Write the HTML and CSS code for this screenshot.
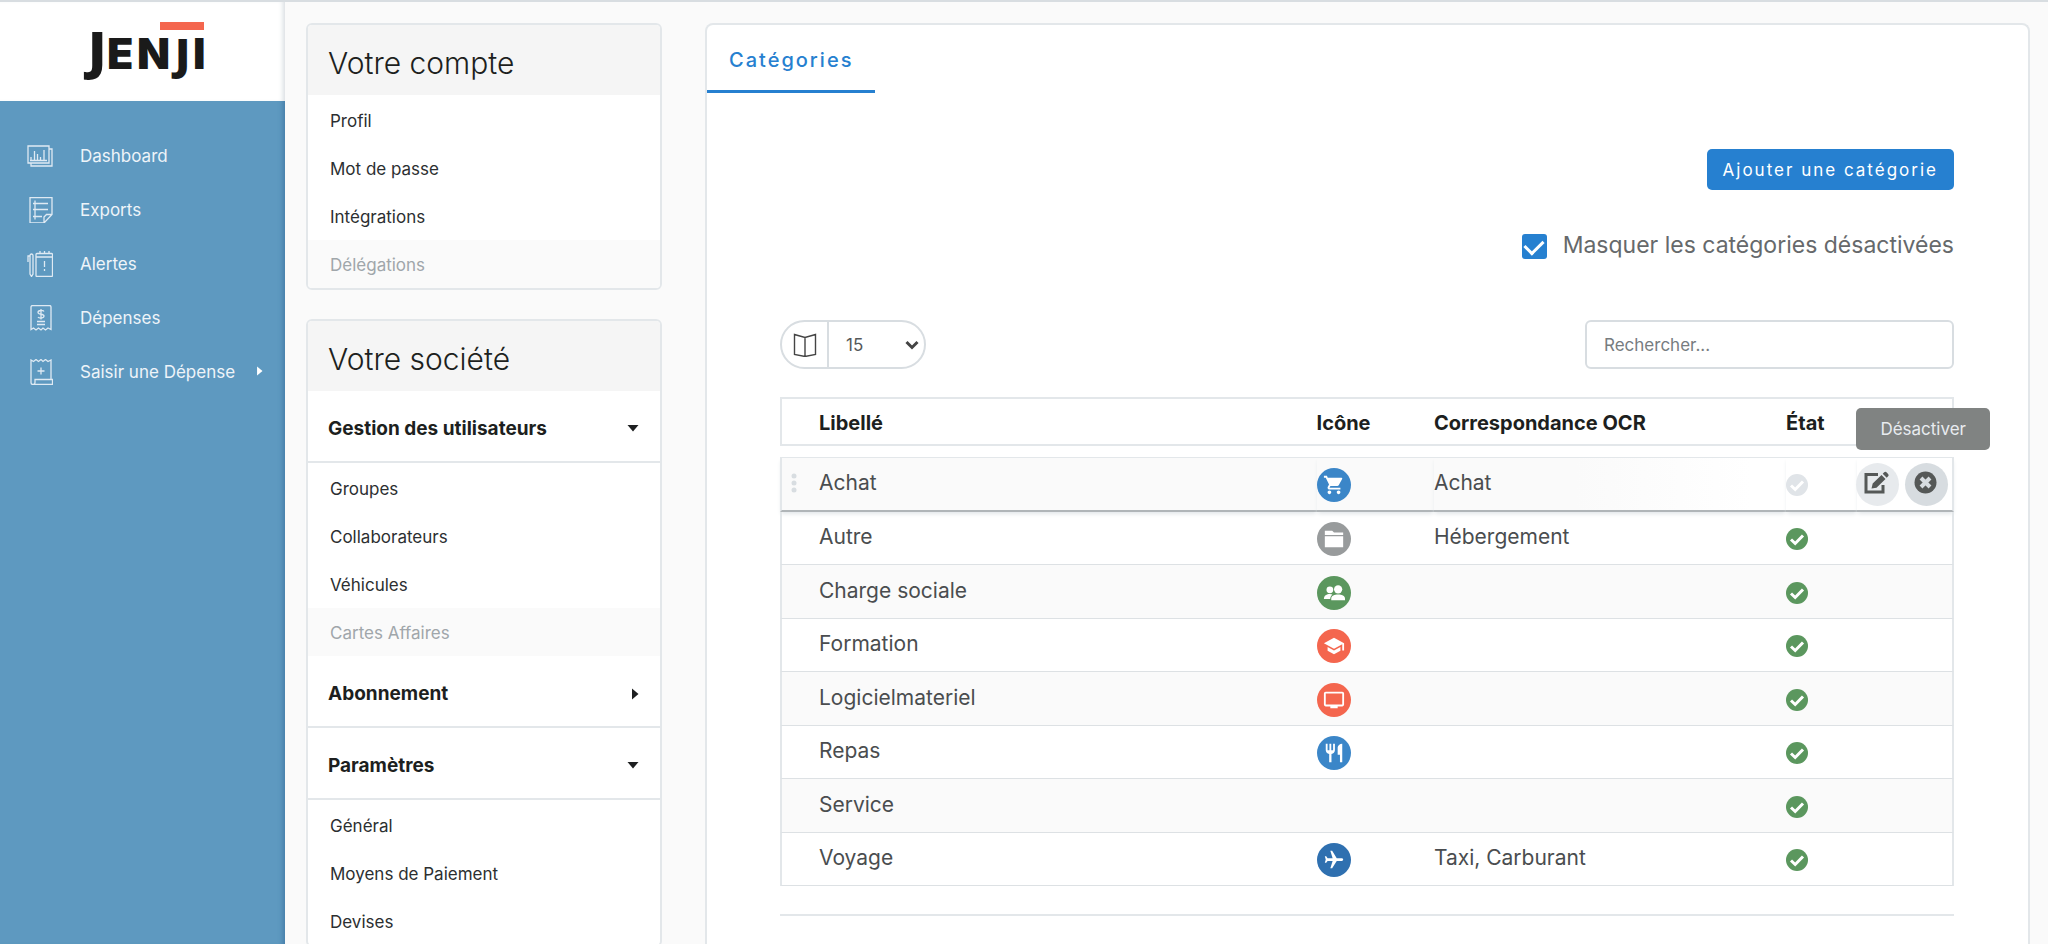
FILE: index.html
```
<!DOCTYPE html>
<html lang="fr">
<head>
<meta charset="utf-8">
<title>Jenji – Catégories</title>
<link rel="stylesheet" href="styles.css">
</head>
<body>
<svg class="defs" aria-hidden="true">
  <symbol id="check" viewBox="0 0 22 22"><circle cx="11" cy="11" r="11" fill="currentColor"/><path d="M5 11.500l4.200 4 7.800-8" fill="none" stroke="#fff" stroke-width="3"/></symbol>
  <symbol id="down" viewBox="0 0 12 7"><path d="M0.500 0h11L6 6.500z" fill="currentColor"/></symbol>
  <symbol id="right" viewBox="0 0 7 12"><path d="M0 0.500v11L6.500 6z" fill="currentColor"/></symbol>
</svg>
<div class="app">
  <aside class="sidebar">
    <a class="logo" href="#" aria-label="Jenji">
      <svg width="154" height="99" viewBox="70 2 154 99" aria-hidden="true">
        <rect x="160" y="22" width="44" height="8" fill="#f4664e"/>
        <text class="logo-text" y="69"><tspan class="logo-cap" x="88">J</tspan><tspan x="107 137">EN</tspan><tspan class="logo-j" x="175">J</tspan><tspan x="193">I</tspan></text>
      </svg>
    </a>
    <nav class="nav">
      <a href="#"><svg class="nav-icon" viewBox="0 0 26 26"><path d="M1 3h21v17H1zM22 6h3v17H4v-3M3 17.500h17M4 17v-3M7.500 17V8M10.500 17v-6M13.500 17v-3M17 17V7"/></svg>Dashboard</a>
      <a href="#"><svg class="nav-icon" viewBox="0 0 26 26"><path d="M3 .5h22v17L17 26H3zM25 17.500h-5.500L17 20v6M8 3.500v19M6 6.500h15M6 12.500h15M6 19.500h9"/></svg>Exports</a>
      <a href="#"><svg class="nav-icon" viewBox="0 0 26 26"><rect x="9" y="2.500" width="16.500" height="23" rx="1"/><path d="M9 6h16.500M13 0v3M17.500 0v3M22 0v3M17.500 10v6M17.500 18v2M3 4.500a1.500 1.500 0 0 1 3 0V23l-1.500 2.500L3 23zM3 5H1v6"/></svg>Alertes</a>
      <a href="#"><svg class="nav-icon" viewBox="0 0 26 26"><path d="M4 24.500V2a1.500 1.500 0 0 1 1.500-1.500h17A1.500 1.500 0 0 1 24 2v22.500l-3-1.500-2.500 2-2.500-2-2 2-2.500-2L9 25l-2.500-2zM17 6.500c-1-1.500-6-1.500-6 1s6 1 6 3.500-5 2.500-6 1M14 4v10.500M10 16.500h8M10 19.500h8"/></svg>Dépenses</a>
      <a href="#"><svg class="nav-icon" viewBox="0 0 26 26"><path d="M24 20.500V1l-3 1.500L18.500.5 16 2.500l-2-2-2.500 2L9 .5 6.500 2.500 4 1v22.500a2 2 0 0 0 2 2h19.500v-5H8v3a2 2 0 0 1-2 2M10.500 12h7M14 8.500v7"/></svg>Saisir une Dépense<svg class="arrow-right" viewBox="0 0 7 12"><use href="#right"/></svg></a>
    </nav>
  </aside>

  <div class="settings">
    <section class="card">
      <h2>Votre compte</h2>
      <ul>
        <li><a href="#">Profil</a></li>
        <li><a href="#">Mot de passe</a></li>
        <li><a href="#">Intégrations</a></li>
        <li class="off"><a>Délégations</a></li>
      </ul>
    </section>
    <section class="card">
      <h2>Votre société</h2>
      <button class="group" type="button" aria-expanded="true">Gestion des utilisateurs<svg class="arrow-down"><use href="#down"/></svg></button>
      <ul>
        <li><a href="#">Groupes</a></li>
        <li><a href="#">Collaborateurs</a></li>
        <li><a href="#">Véhicules</a></li>
        <li class="off"><a>Cartes Affaires</a></li>
      </ul>
      <button class="group" type="button" aria-expanded="false">Abonnement<svg class="arrow-right"><use href="#right"/></svg></button>
      <button class="group" type="button" aria-expanded="true">Paramètres<svg class="arrow-down"><use href="#down"/></svg></button>
      <ul>
        <li><a href="#">Général</a></li>
        <li><a href="#">Moyens de Paiement</a></li>
        <li><a href="#">Devises</a></li>
      </ul>
    </section>
  </div>

  <main class="panel">
    <nav class="tabs"><a class="tab" href="#">Catégories</a></nav>
    <div class="content">
      <button class="primary" type="button">Ajouter une catégorie</button>
      <label class="hide-toggle"><input type="checkbox" checked>Masquer les catégories désactivées</label>
      <div class="tools">
        <div class="pager">
          <span class="pager-icon"><svg width="24" height="24" viewBox="0 0 24 24"><path d="M1.500 1.500L12 4.500l10.500-3v20L12 23.500l-10.500-2zM12 4.500v19"/></svg></span>
          <select aria-label="Lignes par page"><option>15</option></select>
          <svg class="chevron" width="14" height="10" viewBox="0 0 14 10"><path d="M1.500 2L7 7.500 12.500 2"/></svg>
        </div>
        <input class="search" type="search" placeholder="Rechercher..." aria-label="Rechercher">
      </div>
      <table>
        <colgroup><col class="c-label"><col class="c-icon"><col class="c-ocr"><col class="c-state"><col class="c-actions"></colgroup>
        <thead><tr><th>Libellé</th><th>Icône</th><th>Correspondance OCR</th><th>État</th><th></th></tr></thead>
        <tbody>
          <tr class="hovered">
            <td><span class="label"><svg class="grip" width="6" height="20" viewBox="0 0 6 20"><circle cx="3" cy="3" r="2.500"/><circle cx="3" cy="10" r="2.500"/><circle cx="3" cy="17" r="2.500"/></svg>Achat</span></td>
            <td><span class="badge blue"><svg viewBox="0 0 24 24"><path d="M7 18c-1.100 0-1.990.9-1.990 2S5.900 22 7 22s2-.9 2-2-.9-2-2-2zM1 2v2h2l3.600 7.590-1.350 2.450c-.16.280-.25.610-.25.960 0 1.100.9 2 2 2h12v-2H7.420c-.14 0-.25-.11-.25-.25l.03-.12.9-1.630h7.450c.75 0 1.410-.41 1.750-1.030l3.580-6.490c.08-.14.120-.31.120-.48 0-.55-.45-1-1-1H5.210l-.94-2H1zm16 16c-1.100 0-1.990.9-1.990 2s.89 2 1.990 2 2-.9 2-2-.9-2-2-2z"/></svg></span></td>
            <td>Achat</td>
            <td><svg class="state pale"><use href="#check"/></svg></td>
            <td><div class="actions">
              <button type="button" aria-label="Modifier"><svg width="26" height="24" viewBox="0 0 26 24"><path d="M15 3.500H3v17.500h17v-7" fill="none" stroke="currentColor" stroke-width="3"/><path d="M8.500 17.500l1.200-5L18.500 4l4 4-9 8.700zM19.700 2.800L21.200 1.300q1.200-1 2.500.1l1.400 1.500q1 1.300 0 2.400l-1.400 1.500z"/></svg></button>
              <button class="active" type="button" aria-label="Désactiver" aria-describedby="tip"><svg width="23" height="23" viewBox="0 0 23 23"><circle cx="11.500" cy="11.500" r="11"/><path d="M7 7l9 9M16 7l-9 9" stroke="#d7dce0" stroke-width="4"/></svg></button>
              <span class="tooltip" id="tip" role="tooltip">Désactiver</span>
            </div></td>
          </tr>
          <tr>
            <td><span class="label">Autre</span></td>
            <td><span class="badge grey"><svg viewBox="0 0 24 24"><path d="M2 3h8l2 2h10v2.500H2zM2 9h20v12H2z"/></svg></span></td>
            <td>Hébergement</td><td><svg class="state"><use href="#check"/></svg></td><td></td>
          </tr>
          <tr>
            <td><span class="label">Charge sociale</span></td>
            <td><span class="badge green"><svg viewBox="0 0 24 24"><circle cx="7.500" cy="8.500" r="3.700"/><circle cx="16.500" cy="8" r="4.500"/><path d="M1 18.500c0-4 3-5.500 6.500-5.500 1 0 2 .2 2.800.5C8.800 14.700 8 16.300 7.800 18.500zM9 20v-2c0-3.200 3.500-4.500 7.500-4.500S24 14.800 24 18v2z"/></svg></span></td>
            <td></td><td><svg class="state"><use href="#check"/></svg></td><td></td>
          </tr>
          <tr>
            <td><span class="label">Formation</span></td>
            <td><span class="badge red"><svg viewBox="0 0 24 24"><path d="M5 13.180v4L12 21l7-3.820v-4L12 17l-7-3.820zM12 3L1 9l11 6 9-4.910V17h2V9L12 3z"/></svg></span></td>
            <td></td><td><svg class="state"><use href="#check"/></svg></td><td></td>
          </tr>
          <tr>
            <td><span class="label">Logicielmateriel</span></td>
            <td><span class="badge red"><svg viewBox="0 0 24 24"><path d="M21 3H3c-1.100 0-2 .9-2 2v12c0 1.100.9 2 2 2h5v2h8v-2h5c1.100 0 1.990-.9 1.990-2L23 5c0-1.100-.9-2-2-2zm0 14H3V5h18v12z"/></svg></span></td>
            <td></td><td><svg class="state"><use href="#check"/></svg></td><td></td>
          </tr>
          <tr>
            <td><span class="label">Repas</span></td>
            <td><span class="badge blue"><svg viewBox="0 0 24 24"><path d="M11 9H9V2H7v7H5V2H3v7c0 2.120 1.660 3.840 3.750 3.970V22h2.500v-9.030C11.340 12.840 13 11.120 13 9V2h-2v7zm5-3v8h2.500v8H21V2c-2.760 0-5 2.240-5 4z"/></svg></span></td>
            <td></td><td><svg class="state"><use href="#check"/></svg></td><td></td>
          </tr>
          <tr>
            <td><span class="label">Service</span></td>
            <td></td><td></td><td><svg class="state"><use href="#check"/></svg></td><td></td>
          </tr>
          <tr>
            <td><span class="label">Voyage</span></td>
            <td><span class="badge navy"><svg viewBox="0 0 24 24"><path transform="rotate(90 12 12)" d="M21 16v-2l-8-5V3.500c0-.83-.67-1.500-1.500-1.500S10 2.670 10 3.500V9l-8 5v2l8-2.500V19l-2 1.500V22l3.500-1 3.500 1v-1.500L13 19v-5.500l8 2.500z"/></svg></span></td>
            <td>Taxi, Carburant</td><td><svg class="state"><use href="#check"/></svg></td><td></td>
          </tr>
        </tbody>
      </table>
      <hr>
    </div>
  </main>
</div>
</body>
</html>
```
FILE: styles.css
```
* { box-sizing: border-box; }
body {
  margin: 0;
  font-family: Inter, "Liberation Sans", sans-serif;
  font-size: 17px;
  color: #1d1f20;
  background: #fafafa;
}
a { color: inherit; text-decoration: none; }
button, input, select { font: inherit; color: inherit; }
.defs { display: none; }

.app {
  display: flex;
  align-items: flex-start;
  height: 100vh;
  overflow: hidden;
  border-top: 2px solid #d8dde1;
}

/* Sidebar */
.sidebar {
  flex: 0 0 285px;
  align-self: stretch;
  background: #5e99c0;
  box-shadow: inset -6px 0 5px -4px rgba(30, 80, 130, .4);
}
.logo {
  display: flex;
  justify-content: center;
  padding-left: 9px;
  background: #fff;
  box-shadow: inset -5px 0 5px -3px #d8dde1;
}
.logo-text { font: 900 43px Inter, sans-serif; fill: #1a1a1a; }
.logo-cap, .logo-j { font-family: "Open Sans", "Noto Sans", sans-serif; font-weight: 800; }
.logo-cap { font-size: 52px; }
.nav { display: flex; flex-direction: column; padding: 28px 0 0 27px; }
.nav a { display: flex; align-items: center; height: 54px; color: #eef4f9; }
.nav-icon {
  width: 26px;
  height: 26px;
  margin-right: 27px;
  fill: none;
  stroke: #dfeaf3;
  stroke-width: 1.3;
}
.arrow-right { width: 7px; height: 12px; }
.arrow-down { width: 12px; height: 7px; }
.nav .arrow-right { margin: 0 22px 2px auto; color: #fff; width: 6px; height: 10px; }

/* Settings menu */
.settings {
  flex: 0 0 356px;
  display: flex;
  flex-direction: column;
  gap: 29px;
  margin: 21px 43px 0 21px;
}
.card { overflow: hidden; background: #fff; border: 2px solid #e3e7ea; border-radius: 6px; }
.card h2 {
  margin: 0;
  padding: 20px 20px 14px;
  font-size: 30px;
  line-height: 36px;
  font-weight: 300;
  background: #f5f5f5;
}
.card ul { margin: 0; padding: 1px 0 0; list-style: none; }
.card li { padding: 15px 22px 13px; line-height: 20px; color: #2c2f31; }
.card li.off { color: #a0a6aa; background: #fafafa; }
.group {
  display: flex;
  justify-content: space-between;
  align-items: center;
  width: 100%;
  height: 72px;
  padding: 5px 21px 0 20px;
  border: 0;
  border-bottom: 2px solid #e3e7ea;
  background: none;
  font-size: 19px;
  font-weight: 700;
}

/* Main panel */
.panel {
  flex: 1;
  align-self: stretch;
  margin: 21px 18px 0 0;
  background: #fff;
  border: 2px solid #e3e7ea;
  border-bottom: 0;
  border-radius: 8px 8px 0 0;
}
.tabs { display: flex; }
.tab {
  padding: 23px 22px 17px;
  line-height: 25px;
  font-size: 20px;
  font-weight: 500;
  letter-spacing: 2px;
  color: #2680d0;
  border-bottom: 3px solid #2680d0;
}
.content { display: flex; flex-direction: column; padding: 56px 74px 0 73px; }
.primary {
  align-self: flex-end;
  height: 41px;
  padding: 0 16px;
  border: 0;
  border-radius: 5px;
  background: #2680d0;
  color: #fff;
  font-size: 17px;
  letter-spacing: 2px;
}
.hide-toggle {
  align-self: flex-end;
  display: flex;
  align-items: center;
  gap: 16px;
  margin-top: 40px;
  line-height: 30px;
  font-size: 23px;
  color: #66696b;
}
.hide-toggle input {
  appearance: none;
  display: grid;
  place-items: center;
  width: 25px;
  height: 25px;
  margin: 3px 0 0;
  border-radius: 3px;
  background: #2680d0;
}
.hide-toggle input:checked::before {
  content: "";
  width: 15px;
  height: 9px;
  margin-bottom: 4px;
  border: solid #fff;
  border-width: 0 0 3px 3px;
  transform: rotate(-45deg);
}
.tools { display: flex; justify-content: space-between; margin-top: 60px; }
.pager {
  position: relative;
  display: flex;
  width: 146px;
  height: 49px;
  border: 2px solid #d8dde1;
  border-radius: 25px;
  overflow: hidden;
}
.pager-icon {
  display: grid;
  place-items: center;
  width: 47px;
  border-right: 2px solid #d8dde1;
}
.pager-icon svg { fill: none; stroke: #444; stroke-width: 1.4; }
.pager select {
  appearance: none;
  flex: 1;
  padding: 0 17px;
  border: 0;
  background: none;
  font-size: 17px;
  color: #55585a;
}
.chevron {
  position: absolute;
  right: 5px;
  top: 18px;
  fill: none;
  stroke: #444;
  stroke-width: 3;
  pointer-events: none;
}
.search {
  appearance: none;
  width: 369px;
  height: 49px;
  padding: 0 17px;
  border: 2px solid #d8dde1;
  border-radius: 6px;
  background: #fff;
  font-size: 17px;
}
.search::placeholder { color: #777c7f; opacity: 1; }

/* Categories table */
table {
  width: 100%;
  margin-top: 28px;
  border-collapse: separate;
  border-spacing: 0;
  table-layout: fixed;
  font-size: 21px;
}
.c-label { width: 45.7%; }
.c-icon { width: 10%; }
.c-ocr { width: 30%; }
.c-state { width: 6%; }
.c-actions { width: 8.3%; }
th {
  height: 49px;
  padding: 2px 0 0;
  border: solid #e3e7ea;
  border-width: 2px 0;
  text-align: left;
  font-size: 20px;
  font-weight: 700;
  white-space: nowrap;
}
th:first-child { padding-left: 37px; }
tr > :first-child { border-left: 2px solid #e3e7ea; }
tr > :last-child { border-right: 2px solid #e3e7ea; }
tbody::before { content: ""; display: block; height: 11px; }
td {
  height: 53px;
  padding: 0 0 3px;
  color: #4a4d4f;
  border-bottom: 1px solid #dde1e4;
}
tr:nth-child(odd) td { background: #fafafa; }
tr:nth-child(even) td { background: #fff; }
tbody tr:nth-child(odd) td { height: 54px; }
.label { display: flex; align-items: center; padding-left: 37px; }
.grip { margin: 0 22px 0 -28px; fill: #d8dde1; }
tbody tr.hovered td {
  position: relative;
  height: 55px;
  border-top: 1px solid #e3e7ea;
  border-bottom: 2px solid #b0b5b8;
  box-shadow: 0 3px 4px -1px #e3e7ea;
}
thead tr th { background: #fff; }
tbody tr.hovered td:nth-child(n+4) { background: #fff; }
tbody tr.hovered td:nth-child(3) { background: linear-gradient(90deg, #fafafa 40%, #fff 90%); }
.badge {
  display: grid;
  place-items: center;
  width: 34px;
  height: 34px;
  margin-top: 5px;
  border-radius: 50%;
}
.badge svg { width: 22px; height: 22px; fill: #fff; }
.blue { background: #3b86c8; }
.navy { background: #2f70b0; }
.grey { background: #989b9c; }
.green { background: #5b975e; }
.red { background: #f4664e; }
.state { display: block; width: 22px; height: 22px; margin-top: 5px; color: #5b975e; }
.state.pale { color: #e0e4e8; }
.actions { position: relative; display: flex; justify-content: flex-end; gap: 6px; margin-top: 3px; padding-right: 4px; }
.actions button {
  display: grid;
  place-items: center;
  flex: 0 0 43px;
  height: 43px;
  padding: 0 3px 3px 0;
  border: 0;
  border-radius: 50%;
  background: #e7eaed;
  color: #555857;
}
.actions button.active { background: #d7dce0; }
.actions svg { fill: currentColor; }
.tooltip {
  position: absolute;
  right: -38px;
  bottom: 56px;
  padding: 10px 24px;
  border-radius: 5px;
  background: #808382;
  color: #e8ebef;
  font-size: 17px;
  line-height: 22px;
}
hr { width: 100%; margin: 28px 0 0; border: 0; border-top: 2px solid #e3e7ea; }
```
